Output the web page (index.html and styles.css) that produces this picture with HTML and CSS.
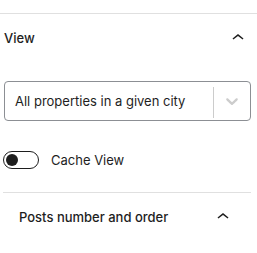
FILE: index.html
```html
<!DOCTYPE html>
<html>
<head>
<meta charset="utf-8">
<link rel="stylesheet" href="styles.css">
</head>
<body>
<div class="panel-view">
  <div class="view-header">
    <span class="title">View</span>
    <svg class="chev" viewBox="0 0 24 24" width="24" height="24"><path d="M6.5 12.4L12 8l5.5 4.4-.9 1.2L12 10l-4.6 3.6-.9-1.2z" fill="#1e1e1e"/></svg>
  </div>
  <div class="select">
    <div class="value">All properties in a given city</div>
    <span class="sep"></span>
    <div class="indicator">
      <svg viewBox="0 0 20 20" width="20" height="20"><path fill="#cccccc" d="M4.516 7.548c0.436-0.446 1.043-0.481 1.576 0l3.908 3.747 3.908-3.747c0.533-0.481 1.141-0.446 1.574 0 0.436 0.445 0.408 1.197 0 1.615-0.418 0.418-4.695 4.502-4.695 4.502-0.217 0.223-0.502 0.335-0.787 0.335s-0.57-0.112-0.789-0.335c0 0-4.275-4.084-4.695-4.502s-0.436-1.17 0-1.615z"/></svg>
    </div>
  </div>
  <div class="toggle-row">
    <span class="toggle"><span class="thumb"></span></span>
    <span class="label">Cache View</span>
  </div>
</div>
<div class="panel-posts">
  <div class="posts-header">
    <span class="title">Posts number and order</span>
    <svg class="chev" viewBox="0 0 24 24" width="24" height="24"><path d="M6.5 12.4L12 8l5.5 4.4-.9 1.2L12 10l-4.6 3.6-.9-1.2z" fill="#1e1e1e"/></svg>
  </div>
</div>
</body>
</html>
```
FILE: styles.css
```css
html, body {
  margin: 0;
  padding: 0;
  background: #ffffff;
}
body {
  font-family: Inter, "Liberation Sans", sans-serif;
  font-size: 13px;
  color: #1e1e1e;
  width: 257px;
  height: 253px;
  overflow: hidden;
}
.panel-view {
  margin-top: 13px;
  border-top: 1px solid #e0e0e0;
}
.view-header {
  height: 48px;
  display: flex;
  align-items: center;
  justify-content: space-between;
  padding: 0 7px 0 4px;
}
.title {
  font-weight: 500;
}
.chev {
  display: block;
}
.select {
  margin: 19px 6px 0 4px;
  height: 40px;
  box-sizing: border-box;
  border: 1px solid #8c8f94;
  border-radius: 4px;
  display: flex;
  align-items: stretch;
}
.value {
  flex: 1;
  display: flex;
  align-items: center;
  padding-left: 10px;
}
.sep {
  width: 1px;
  background: #cccccc;
  margin: 5px 0 2px;
}
.indicator {
  padding: 0 8px;
  display: flex;
  align-items: center;
}
.indicator svg {
  display: block;
}
.toggle-row {
  margin: 30px 0 0 3px;
  display: flex;
  align-items: center;
}
.toggle {
  position: relative;
  width: 36px;
  height: 18px;
  box-sizing: border-box;
  border: 1px solid #1e1e1e;
  border-radius: 9px;
  background: #fff;
}
.thumb {
  position: absolute;
  left: 2px;
  top: 2px;
  width: 12px;
  height: 12px;
  border-radius: 50%;
  background: #1e1e1e;
}
.label {
  margin-left: 12px;
}
.panel-posts {
  margin: 23px 6px 0 3px;
  border-top: 1px solid #e0e0e0;
}
.posts-header {
  height: 48px;
  display: flex;
  align-items: center;
  justify-content: space-between;
  padding: 0 16px;
}
```
